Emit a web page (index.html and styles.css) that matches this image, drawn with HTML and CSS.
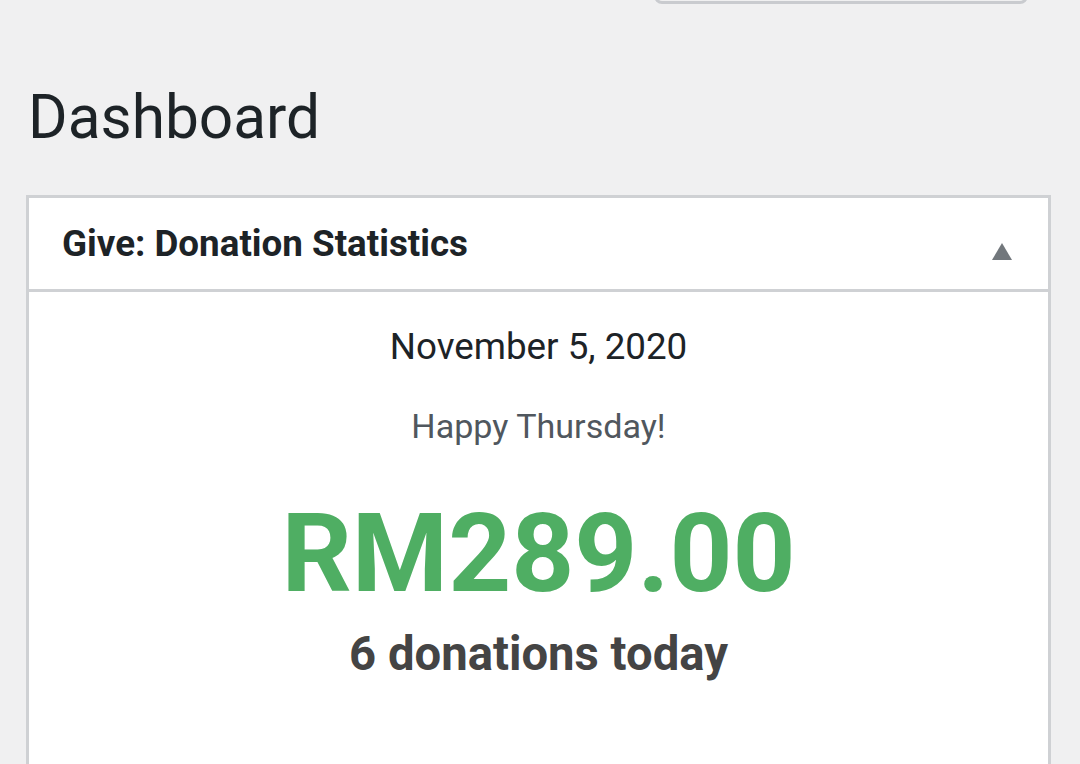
FILE: index.html
```html
<!DOCTYPE html>
<html lang="en">
<head>
<meta charset="utf-8">
<title>Dashboard</title>
<link rel="stylesheet" href="styles.css">
</head>
<body>
<div class="wrap">
  <div class="topbar">
    <div class="screen-options"></div>
  </div>
  <h1 class="page-title">Dashboard</h1>
  <div class="postbox">
    <div class="postbox-header">
      <h2 class="postbox-title">Give: Donation Statistics</h2>
      <span class="toggle-arrow"></span>
    </div>
    <div class="postbox-inside">
      <p class="stat-date">November 5, 2020</p>
      <p class="stat-greeting">Happy Thursday!</p>
      <p class="stat-amount">RM289.00</p>
      <p class="stat-count">6 donations today</p>
    </div>
  </div>
</div>
</body>
</html>
```

FILE: styles.css
```css
html, body {
  margin: 0;
  padding: 0;
  background: #f0f0f1;
  font-family: Roboto, "Noto Sans", "Liberation Sans", sans-serif;
  color: #1d2327;
  overflow: hidden;
  height: 764px;
}

.wrap {
  padding: 0 29px 0 26px;
}

.topbar {
  display: flex;
  justify-content: flex-end;
  height: 4px;
}

.screen-options {
  width: 374px;
  height: 40px;
  margin-top: -36px;
  margin-right: 23px;
  border: 3px solid #c9cbcf;
  border-radius: 8px;
  box-sizing: border-box;
}

.page-title {
  margin: 75px 0 0 2px;
  font-size: 60.4px;
  font-weight: 400;
  line-height: 1.3;
  color: #1d2327;
}

.postbox {
  margin-top: 37.5px;
  background: #fff;
  border: 3px solid #cfd1d4;
  height: 700px;
}

.postbox-header {
  display: flex;
  align-items: center;
  justify-content: space-between;
  height: 91px;
  border-bottom: 3px solid #cfd1d4;
  padding: 0 36px 0 33px;
}

.postbox-title {
  margin: 0;
  font-size: 36.75px;
  font-weight: 700;
  line-height: 91px;
  color: #1d2327;
}

.toggle-arrow {
  width: 0;
  height: 0;
  border-left: 10.5px solid transparent;
  border-right: 10.5px solid transparent;
  border-bottom: 17px solid #72777c;
  margin-top: 16px;
}

.postbox-inside {
  display: flex;
  flex-direction: column;
  align-items: center;
  padding-top: 32.7px;
  text-align: center;
}

.postbox-inside p {
  margin: 0;
}

.stat-date {
  font-size: 36.75px;
  line-height: 44px;
  color: #1d2327;
}

.stat-greeting {
  margin-top: 35.9px !important;
  font-size: 34.1px;
  line-height: 42px;
  color: #50575e;
}

.stat-amount {
  margin-top: 52.4px !important;
  font-size: 110px;
  font-weight: 700;
  line-height: 110px;
  color: #4fae63;
}

.stat-count {
  margin-top: 17px !important;
  font-size: 47.25px;
  font-weight: 700;
  line-height: 56px;
  color: #444444;
}
```
